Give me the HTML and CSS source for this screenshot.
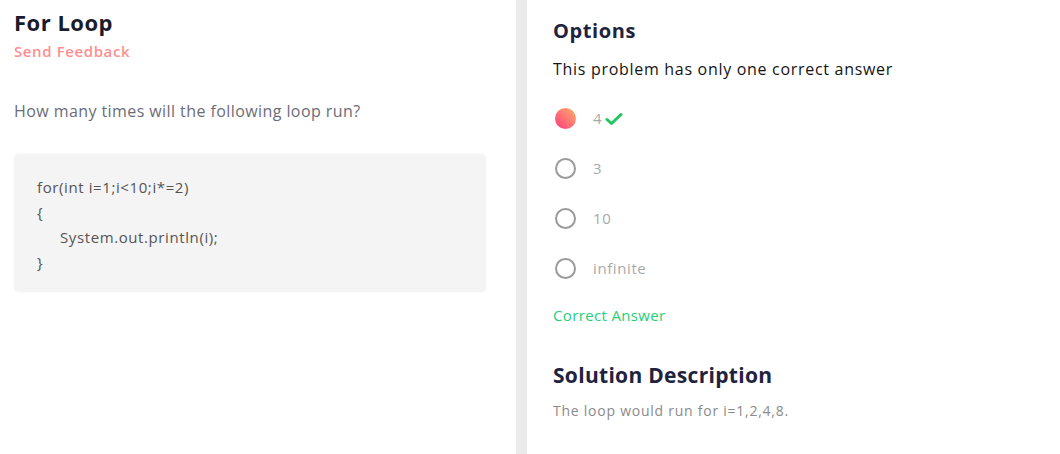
FILE: index.html
```html
<!DOCTYPE html>
<html>
<head>
<meta charset="utf-8">
<link rel="stylesheet" href="styles.css">
</head>
<body>
<div class="page">
  <section class="left">
    <h1 class="title">For Loop</h1>
    <a class="feedback">Send Feedback</a>
    <p class="question">How many times will the following loop run?</p>
    <div class="code">
      <div class="line">for(int i=1;i&lt;10;i*=2)</div>
      <div class="line">{</div>
      <div class="line indent">System.out.println(i);</div>
      <div class="line">}</div>
    </div>
  </section>
  <div class="divider"></div>
  <section class="right">
    <h2 class="heading">Options</h2>
    <p class="note">This problem has only one correct answer</p>
    <ul class="options">
      <li class="option"><span class="radio selected"></span><span class="label">4</span>
        <svg class="check" width="18" height="14" viewBox="0 0 18 14"><path d="M2 7.5 L6.5 11.5 L16 2.5" fill="none" stroke="#1fc65f" stroke-width="3" stroke-linecap="round" stroke-linejoin="round"/></svg>
      </li>
      <li class="option"><span class="radio"></span><span class="label">3</span></li>
      <li class="option"><span class="radio"></span><span class="label">10</span></li>
      <li class="option"><span class="radio"></span><span class="label">infinite</span></li>
    </ul>
    <p class="correct">Correct Answer</p>
    <h2 class="heading solution">Solution Description</h2>
    <p class="desc">The loop would run for i=1,2,4,8.</p>
  </section>
</div>
</body>
</html>
```
FILE: styles.css
```css
* { box-sizing: border-box; }
html, body { margin: 0; padding: 0; background: #fff; }
body { font-family: "Open Sans", "Lato", sans-serif; width: 1060px; height: 454px; overflow: hidden; }
.page { display: flex; height: 454px; }
.left { width: 516px; padding: 8px 30px 0 14px; }
.divider { width: 11px; background: #ebebeb; }
.right { flex: 1; padding: 17px 20px 0 26px; }
.title { margin: 0; font-size: 22px; font-weight: 700; color: #1a1b2b; line-height: 28px; letter-spacing: 0.5px; }
.feedback { display: block; margin-top: 5px; font-size: 15px; font-weight: 600; color: #ff8f8f; line-height: 20px; letter-spacing: 0.6px; }
.question { margin: 39px 0 0; font-size: 16px; color: #6b6c78; line-height: 22px; letter-spacing: 0.42px; }
.code { margin-top: 32px; background: #f4f4f4; border-radius: 5px; box-shadow: 0 0 3px rgba(0,0,0,0.05); padding: 21px 23px 17px; }
.line { font-size: 15px; color: #555; line-height: 25px; letter-spacing: 0.6px; }
.indent { padding-left: 23px; }
.heading { margin: 0; font-size: 20px; font-weight: 700; color: #1f2340; line-height: 28px; letter-spacing: 0.6px; }
.note { margin: 13px 0 0; font-size: 16px; color: #151515; line-height: 22px; letter-spacing: 0.7px; }
.options { list-style: none; margin: 13px 0 0; padding: 0; }
.option { display: flex; align-items: center; height: 50px; }
.radio { width: 21px; height: 21px; border-radius: 50%; border: 2px solid #9a9a9a; margin-left: 2px; flex: none; }
.radio.selected { border: none; background: linear-gradient(to top right, #ff3a80, #ffb06a); }
.label { margin-left: 17px; font-size: 15px; color: #a9a9a9; letter-spacing: 0.6px; }
.check { margin-left: 3px; margin-top: 1px; }
.correct { margin: 12px 0 0; font-size: 15px; color: #27cf77; line-height: 20px; letter-spacing: 0.35px; }
.solution { font-size: 21px; margin-top: 36px; letter-spacing: 0.3px; }
.desc { margin: 12px 0 0; font-size: 14px; color: #8a8a8a; line-height: 20px; letter-spacing: 0.75px; }
```
